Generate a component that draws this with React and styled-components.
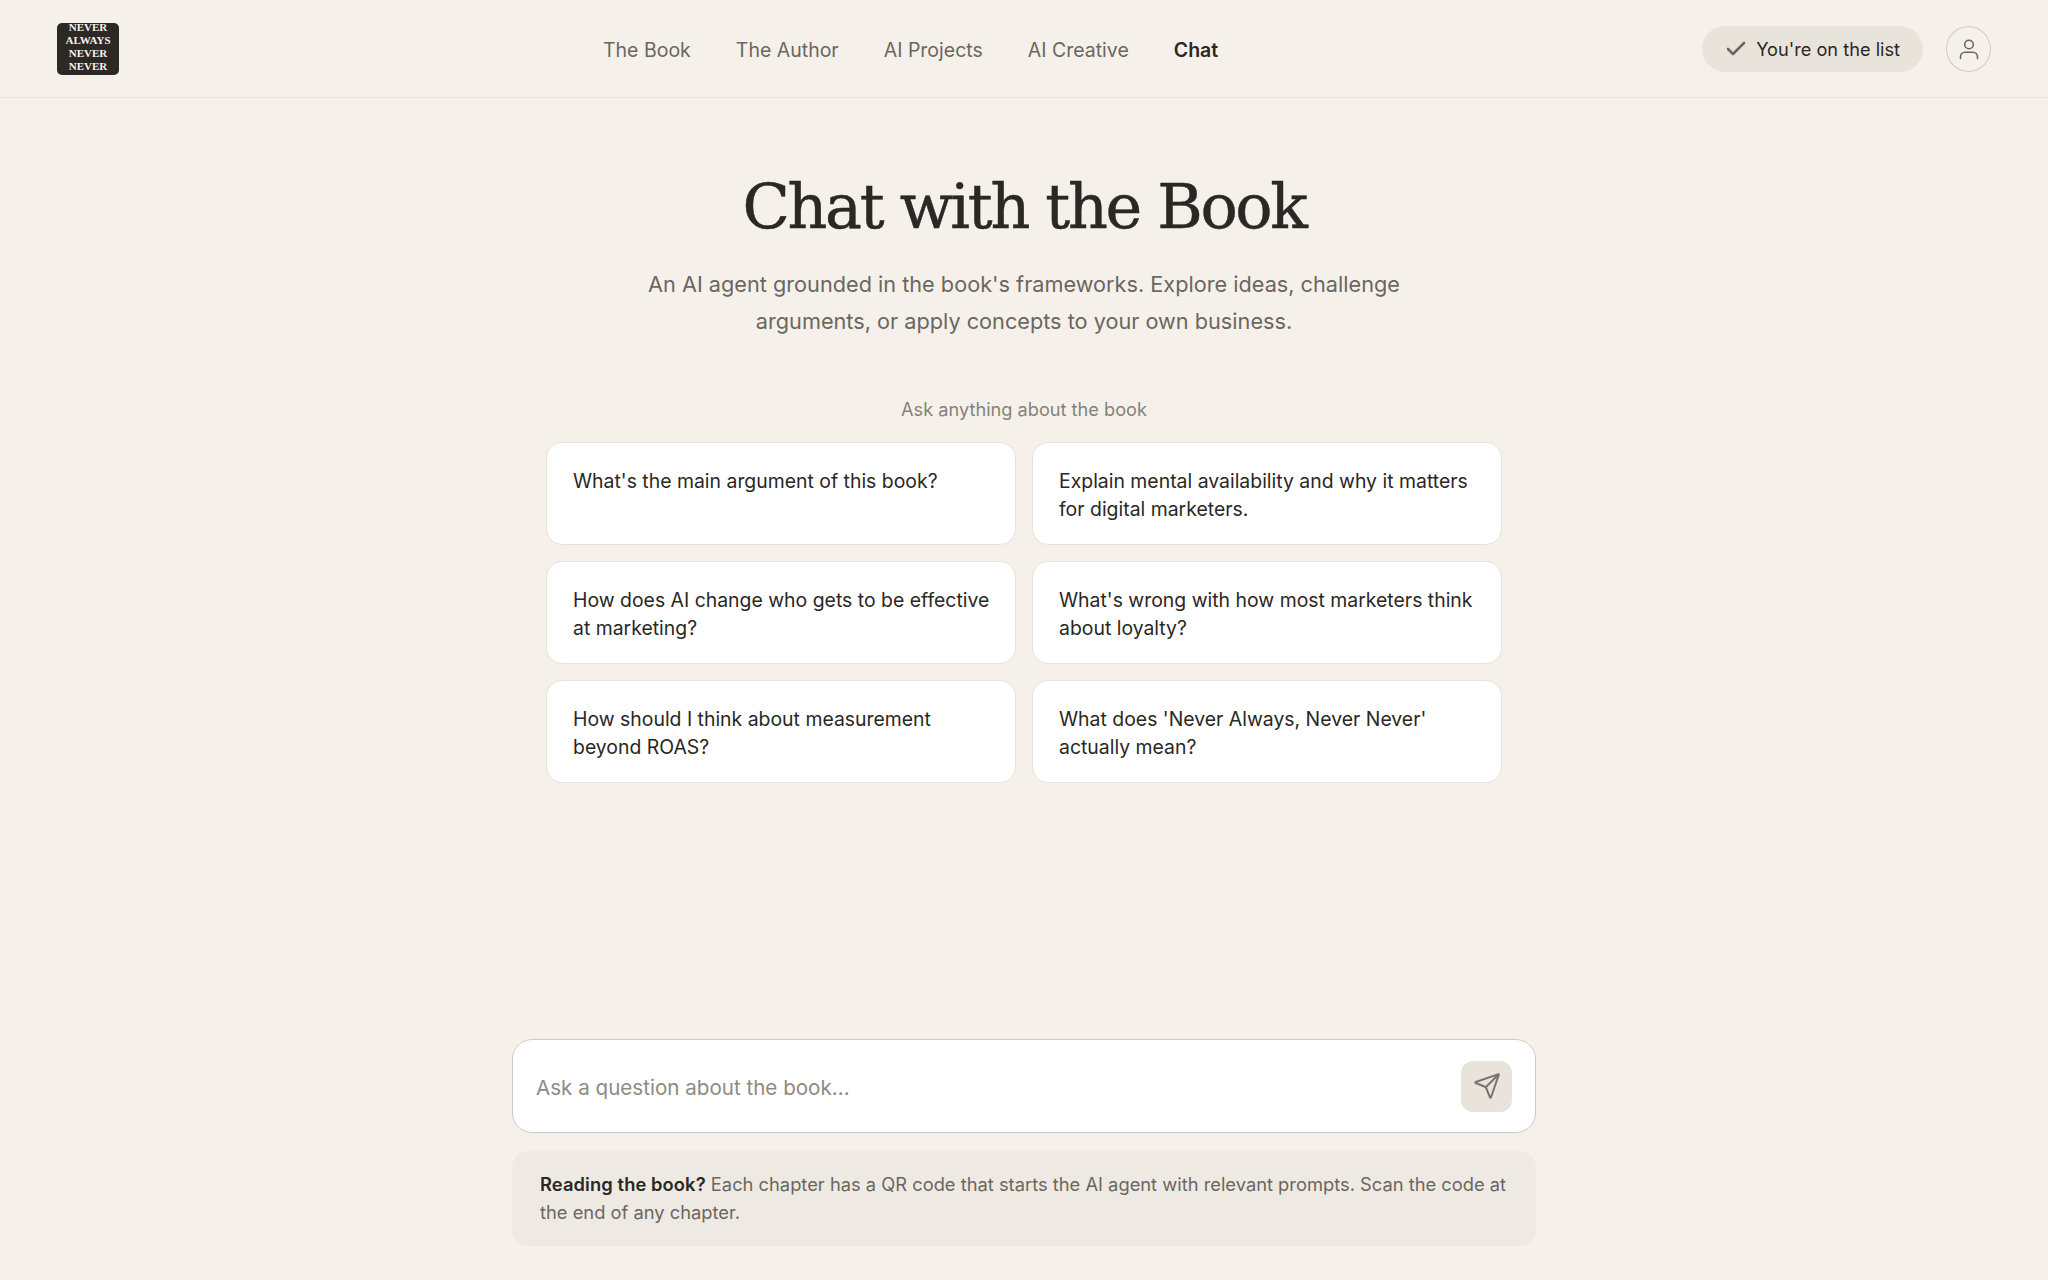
import React from 'react';
import styled, { createGlobalStyle } from 'styled-components';
import { Check, Send } from 'lucide-react';

const GlobalStyle = createGlobalStyle`
  * { box-sizing: border-box; }
  html, body { margin: 0; height: 100%; background: #f5f1ea; }
  body { font-family: Inter, "Liberation Sans", sans-serif; color: #2a2724; }
  #root { height: 100%; }
`;

const Page = styled.div`
  display: flex;
  flex-direction: column;
  height: 1280px;
  overflow: hidden;
`;

const Header = styled.header`
  display: flex;
  justify-content: space-between;
  align-items: center;
  height: 98px;
  flex: none;
  padding: 0 57px;
  border-bottom: 1px solid #e7e3da;
`;

const Logo = styled.div`
  display: flex;
  flex-direction: column;
  align-items: center;
  justify-content: center;
  width: 62px;
  height: 52px;
  padding-bottom: 4px;
  border-radius: 5px;
  background: #2b2825;
  font-family: "Liberation Serif", serif;
  font-weight: 700;
  font-size: 11px;
  line-height: 13px;
  color: #f5f1ea;
`;

const Nav = styled.nav`
  display: flex;
  gap: 45px;
  padding-top: 2px;
`;

const NavLink = styled.a`
  font-size: 19.5px;
  line-height: 28px;
  font-weight: ${(p) => (p.$active ? 600 : 400)};
  color: ${(p) => (p.$active ? '#2a2724' : '#6b665f')};
`;

const HeaderActions = styled.div`
  display: flex;
  align-items: center;
  gap: 23px;
`;

const ListBadge = styled.div`
  display: flex;
  align-items: center;
  gap: 8px;
  height: 46px;
  padding: 0 23px 0 22px;
  border-radius: 23px;
  background: #e8e4dc;
  font-size: 18.2px;
  color: #2a2724;
`;

const UserButton = styled.div`
  display: flex;
  align-items: center;
  justify-content: center;
  width: 45px;
  height: 46px;
  border-radius: 50%;
  border: 1px solid #cfcac1;
  color: #6b665f;
`;

const Main = styled.main`
  flex: 1;
  display: flex;
  flex-direction: column;
  align-items: center;
  padding-top: 69px;
`;

const Title = styled.h1`
  margin: 0;
  font-family: "DejaVu Serif", Georgia, serif;
  font-weight: 400;
  font-size: 62px;
  line-height: 80px;
  letter-spacing: -2.35px;
  -webkit-text-stroke: 0.5px #2a2724;
  color: #2a2724;
`;

const Subtitle = styled.p`
  margin: 19px 0 0;
  width: 780px;
  text-align: center;
  font-size: 21.7px;
  line-height: 37px;
  color: #6b665f;
`;

const Hint = styled.p`
  margin: 56px 0 0;
  font-size: 18.2px;
  line-height: 26px;
  color: #86817a;
`;

const PromptGrid = styled.div`
  display: grid;
  grid-template-columns: 470px 470px;
  gap: 16px;
  margin-top: 20px;
`;

const PromptCard = styled.div`
  height: 103px;
  padding: 23.5px 24px 23px 26px;
  border: 1px solid #e7e3da;
  border-radius: 16px;
  background: #fff;
  font-size: 19.42px;
  line-height: 28px;
  color: #2a2724;
`;

const Footer = styled.div`
  margin-top: auto;
  margin-bottom: 34px;
  width: 1024px;
  display: flex;
  flex-direction: column;
  gap: 18px;
`;

const Composer = styled.div`
  display: flex;
  align-items: center;
  justify-content: space-between;
  height: 94px;
  padding: 0 23px;
  border: 1px solid #cfcac1;
  border-radius: 20px;
  background: #fff;
`;

const Placeholder = styled.span`
  padding-top: 2px;
  font-size: 20.6px;
  color: #8f8a83;
`;

const SendButton = styled.div`
  display: flex;
  align-items: center;
  justify-content: center;
  width: 51px;
  height: 51px;
  border-radius: 12px;
  background: #e8e4dc;
  color: #77726b;
`;

const Note = styled.p`
  margin: 0;
  padding: 19px 28px 20px;
  border-radius: 16px;
  background: #eeeae3;
  font-size: 18.32px;
  line-height: 28px;
  color: #6b665f;

  strong {
    font-weight: 600;
    letter-spacing: 0.1px;
    color: #2a2724;
  }
`;

const navItems = ['The Book', 'The Author', 'AI Projects', 'AI Creative', 'Chat'];

const prompts = [
  "What's the main argument of this book?",
  'Explain mental availability and why it matters for digital marketers.',
  'How does AI change who gets to be effective at marketing?',
  "What's wrong with how most marketers think about loyalty?",
  'How should I think about measurement beyond ROAS?',
  "What does 'Never Always, Never Never' actually mean?",
];

const UserIcon = () => (
  <svg width="24" height="24" viewBox="0 0 24 24" fill="none" stroke="currentColor" strokeWidth="1.6" strokeLinecap="round">
    <circle cx="12" cy="7.5" r="4.3" />
    <path d="M3.5 21.5v-1.6a4.6 4.6 0 0 1 4.6-4.6h7.8a4.6 4.6 0 0 1 4.6 4.6v1.6" />
  </svg>
);

const App = () => {
  return (
    <Page>
      <GlobalStyle />
      <Header>
        <Logo>
          <span>NEVER</span>
          <span>ALWAYS</span>
          <span>NEVER</span>
          <span>NEVER</span>
        </Logo>
        <Nav>
          {navItems.map((item) => (
            <NavLink key={item} $active={item === 'Chat'}>
              {item}
            </NavLink>
          ))}
        </Nav>
        <HeaderActions>
          <ListBadge>
            <Check size={24} strokeWidth={2.6} color="#6b665f" />
            You're on the list
          </ListBadge>
          <UserButton>
            <UserIcon />
          </UserButton>
        </HeaderActions>
      </Header>
      <Main>
        <Title>Chat with the Book</Title>
        <Subtitle>
          An AI agent grounded in the book's frameworks. Explore ideas, challenge arguments, or
          apply concepts to your own business.
        </Subtitle>
        <Hint>Ask anything about the book</Hint>
        <PromptGrid>
          {prompts.map((p) => (
            <PromptCard key={p}>{p}</PromptCard>
          ))}
        </PromptGrid>
        <Footer>
          <Composer>
            <Placeholder>Ask a question about the book...</Placeholder>
            <SendButton>
              <Send size={28} strokeWidth={1.7} />
            </SendButton>
          </Composer>
          <Note>
            <strong>Reading the book?</strong> Each chapter has a QR code that starts the AI agent
            with relevant prompts. Scan the code at the end of any chapter.
          </Note>
        </Footer>
      </Main>
    </Page>
  );
};

export default App;
